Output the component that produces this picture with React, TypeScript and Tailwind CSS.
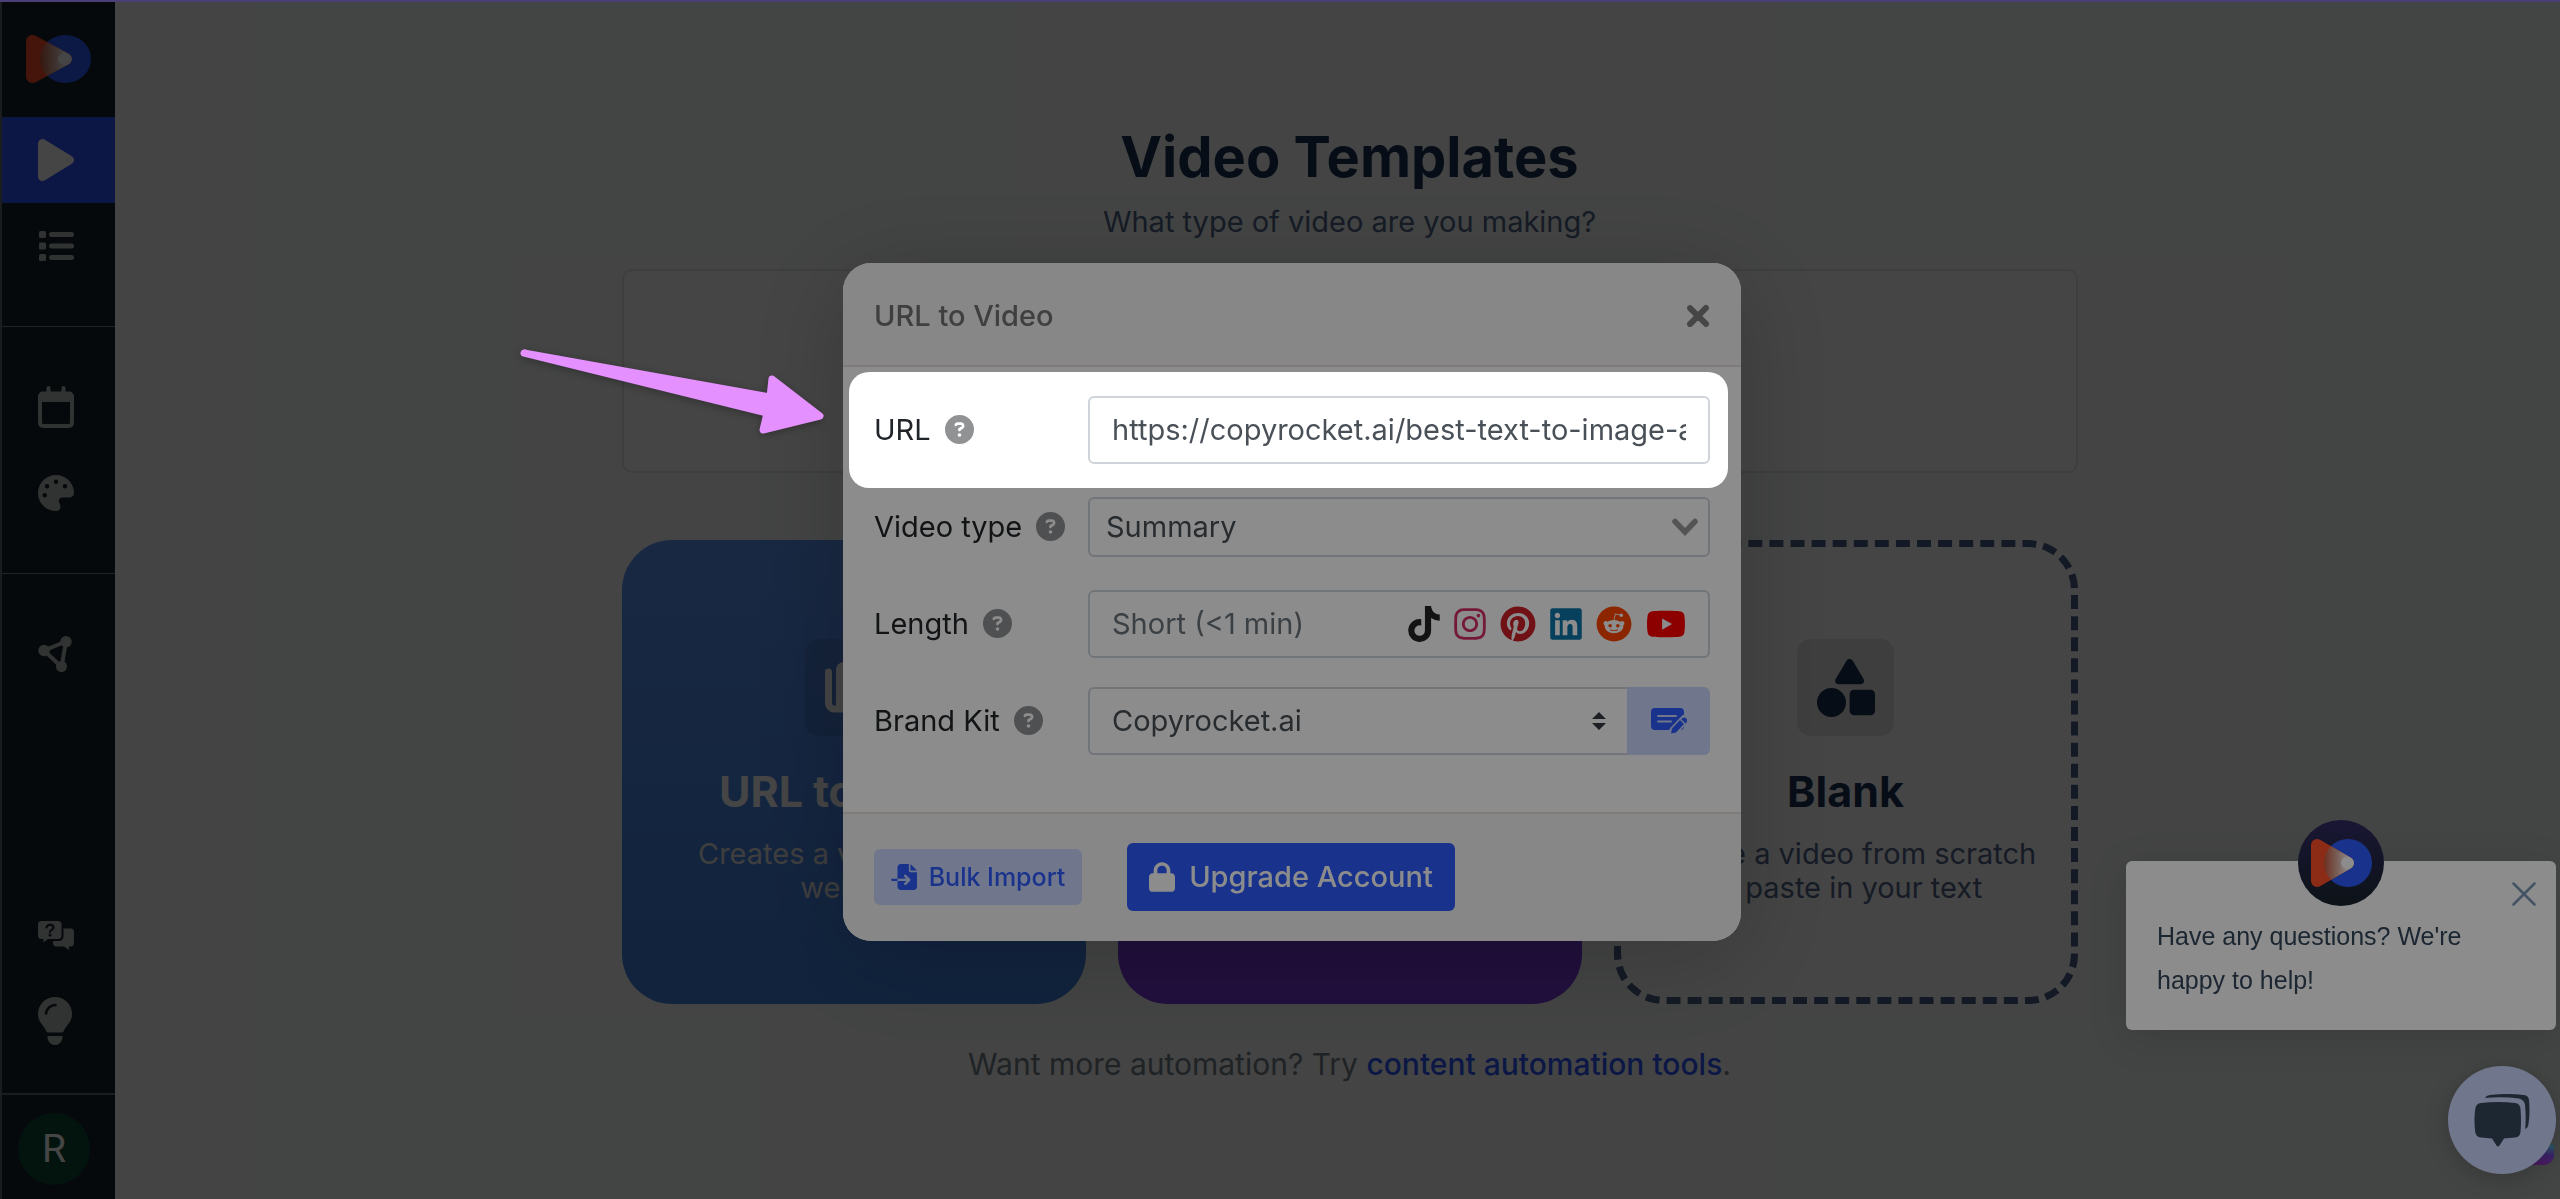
import type { ReactNode } from "react";
import {
  FaInstagram,
  FaLinkedin,
  FaPinterest,
  FaReddit,
  FaTiktok,
  FaYoutube,
} from "react-icons/fa";
import {
  FaCircleQuestion,
  FaFileImport,
  FaLock,
  FaPalette,
  FaShapes,
  FaXmark,
} from "react-icons/fa6";

const socialIcons = [
  { name: "TikTok", icon: FaTiktok, className: "h-9 w-8 text-[#242424]" },
  { name: "Instagram", icon: FaInstagram, className: "h-9 w-8 text-[#d62f6b]" },
  { name: "Pinterest", icon: FaPinterest, className: "h-9 w-9 text-[#cb2027]" },
  { name: "LinkedIn", icon: FaLinkedin, className: "h-9 w-8 text-[#0e76a8]" },
  { name: "Reddit", icon: FaReddit, className: "h-9 w-9 text-[#ff4500]" },
  { name: "YouTube", icon: FaYoutube, className: "h-9 w-10 text-[#ff0000]" },
];

function Logo({ id, className }: { id: string; className: string }) {
  return (
    <svg viewBox="0 0 62 50" preserveAspectRatio="none" className={className} aria-hidden="true">
      <defs>
        <linearGradient id={id} gradientUnits="userSpaceOnUse" x1="14" x2="42">
          <stop offset="0" stopColor="#c8583e" />
          <stop offset="0.4" stopColor="#d8a08f" />
          <stop offset="0.9" stopColor="#fff" />
        </linearGradient>
        <clipPath id={`${id}-clip`}>
          <circle cx="38" cy="25" r="24" />
        </clipPath>
      </defs>
      <circle cx="38" cy="25" r="24" fill="#2f5dff" />
      <path
        d="M7 7v36l31-18z"
        fill="#ff4f28"
        stroke="#ff4f28"
        strokeWidth="12"
        strokeLinejoin="round"
      />
      <g clipPath={`url(#${id}-clip)`}>
        <path
          d="M7 7v36l31-18z"
          fill={`url(#${id})`}
          stroke={`url(#${id})`}
          strokeWidth="12"
          strokeLinejoin="round"
        />
      </g>
      <circle cx="37" cy="25" r="6" fill="#fff" />
    </svg>
  );
}

function PlayIcon() {
  return (
    <svg viewBox="0 0 36 42" className="h-[42px] w-9" fill="currentColor" aria-hidden="true">
      <path
        d="M4.500 4.500v33L31.500 21z"
        stroke="currentColor"
        strokeWidth="9"
        strokeLinejoin="round"
      />
    </svg>
  );
}

function ListIcon() {
  return (
    <svg viewBox="0 0 36 30" className="h-[30px] w-9" fill="currentColor" aria-hidden="true">
      <rect x="1" y="0" width="7" height="7" rx="1.500" />
      <rect x="1" y="11.500" width="7" height="7" rx="1.500" />
      <rect x="1" y="23" width="7" height="7" rx="1.500" />
      <rect x="11" y="1" width="25" height="5" rx="2.500" />
      <rect x="11" y="12.500" width="25" height="5" rx="2.500" />
      <rect x="11" y="24" width="25" height="5" rx="2.500" />
    </svg>
  );
}

function CalendarIcon() {
  return (
    <svg viewBox="0 0 36 42" className="h-[42px] w-9" fill="currentColor" aria-hidden="true">
      <rect x="8.500" y="0" width="4" height="10" rx="2" />
      <rect x="23.500" y="0" width="4" height="10" rx="2" />
      <path
        fillRule="evenodd"
        d="M5 5.500h26a5 5 0 0 1 5 5V37a5 5 0 0 1-5 5H5a5 5 0 0 1-5-5V10.500a5 5 0 0 1 5-5zM4 16v20.500A1.500 1.500 0 0 0 5.500 38h25a1.500 1.500 0 0 0 1.500-1.500V16z"
      />
    </svg>
  );
}

function NetworkIcon() {
  return (
    <svg viewBox="0 0 36 36" className="h-9 w-9" fill="currentColor" aria-hidden="true">
      <path
        d="M6 14.500 28 5.500 23.500 31z"
        fill="none"
        stroke="currentColor"
        strokeWidth="4"
      />
      <circle cx="6" cy="14.500" r="5.700" />
      <circle cx="28" cy="5.700" r="5.700" />
      <circle cx="23.500" cy="30.500" r="5.500" />
    </svg>
  );
}

function QuestionChatIcon() {
  return (
    <svg viewBox="0 0 36 29" className="h-[29px] w-9" fill="currentColor" aria-hidden="true">
      <path d="M3.500 0h16.500a3.500 3.500 0 0 1 3.500 3.500v11a3.500 3.500 0 0 1-3.500 3.500H10l-4.500 3.500V18h-2A3.500 3.500 0 0 1 0 14.500v-11A3.500 3.500 0 0 1 3.500 0z" />
      <path d="M25.500 7.500h7A3.500 3.500 0 0 1 36 11v11a3.500 3.500 0 0 1-3.500 3.500H31V29l-5-3.500h-7.500a3.500 3.500 0 0 1-3.500-3.500v-2h6a4.500 4.500 0 0 0 4.500-4.500z" />
      <path
        d="M8.500 6.500c.3-1.800 1.600-2.700 3.500-2.700 2.100 0 3.500 1 3.500 2.800 0 2.400-3.500 2.200-3.500 4.400"
        fill="none"
        stroke="#16242c"
        strokeWidth="2"
        strokeLinecap="round"
      />
      <circle cx="12" cy="14" r="1.500" fill="#16242c" />
    </svg>
  );
}

function BulbIcon() {
  return (
    <svg viewBox="0 0 34 48" className="h-12 w-[34px]" fill="currentColor" aria-hidden="true">
      <path d="M17 0a17 17 0 0 1 17 16.500c0 9-5.500 11-8.500 18a1.800 1.800 0 0 1-1.500 1H10a1.800 1.800 0 0 1-1.500-1C5.500 27.500 0 25.500 0 16.500A17 17 0 0 1 17 0z" />
      <path d="M9.500 39h15v1.500a7.500 7.500 0 0 1-15 0z" />
      <path
        d="M8 16.500A9.500 9.500 0 0 1 17.500 8"
        fill="none"
        stroke="#16242c"
        strokeWidth="2.600"
        strokeLinecap="round"
      />
    </svg>
  );
}

function PagesIcon() {
  return (
    <svg viewBox="0 0 57 52" className="h-[52px] w-[57px]" fill="currentColor" aria-hidden="true">
      <path
        d="M3.500 10v31a6 6 0 0 0 6 6H44"
        fill="none"
        stroke="currentColor"
        strokeWidth="7"
        strokeLinecap="round"
      />
      <path d="M19 0h30a8 8 0 0 1 8 8v34a8 8 0 0 1-8 8H11V8a8 8 0 0 1 8-8z" />
    </svg>
  );
}

function EditCardIcon() {
  return (
    <svg viewBox="0 0 36 26" className="h-[26px] w-9" aria-hidden="true">
      <rect x="0" y="0" width="33" height="22" rx="4" fill="currentColor" />
      <path d="M7 8h18M7 13.500h13" stroke="#cdd8ff" strokeWidth="2" strokeLinecap="round" />
      <path
        d="M34 11 22.500 23"
        stroke="#cdd8ff"
        strokeWidth="9"
        strokeLinecap="round"
      />
      <path d="m29 12 4 4-8 8.500-5 1 1-5z" fill="currentColor" />
      <path d="M31 10.500a3 3 0 0 1 4.300 4.200l-.8.800-4.300-4.200z" fill="currentColor" />
    </svg>
  );
}

function NavItem({
  label,
  active = false,
  children,
}: {
  label: string;
  active?: boolean;
  children: ReactNode;
}) {
  return (
    <a
      href="#"
      aria-label={label}
      className={
        active
          ? "flex h-[86px] items-center bg-[#2c57ff] pl-9 text-white"
          : "flex h-[86px] items-center pl-9 text-[#b4b8b6]"
      }
    >
      {children}
    </a>
  );
}

function Sidebar() {
  return (
    <aside className="flex min-h-screen w-[115px] shrink-0 flex-col border-l-2 border-[#62666a] bg-[#16242c]">
      <a href="#" aria-label="Home" className="flex h-[117px] items-center pl-[23px]">
        <Logo id="nav-logo" className="h-[50px] w-[66px]" />
      </a>
      <nav>
        <NavItem label="Create video" active>
          <PlayIcon />
        </NavItem>
        <NavItem label="My videos">
          <ListIcon />
        </NavItem>
        <hr className="my-[37px] border-[#7c8084]" />
        <NavItem label="Calendar">
          <CalendarIcon />
        </NavItem>
        <NavItem label="Brand kits">
          <FaPalette className="h-9 w-9" />
        </NavItem>
        <hr className="my-[37px] border-[#7c8084]" />
        <NavItem label="Integrations">
          <NetworkIcon />
        </NavItem>
      </nav>
      <div className="mt-auto">
        <NavItem label="Support">
          <QuestionChatIcon />
        </NavItem>
        <NavItem label="Ideas">
          <BulbIcon />
        </NavItem>
        <div className="mt-[29px] border-t-2 border-[#62666a] px-4 pt-[18px] pb-[14px]">
          <button
            type="button"
            className="flex h-[72px] w-[72px] items-center justify-center rounded-full bg-[#0d4636] font-[Roboto] text-[39px] text-white"
          >
            R
          </button>
        </div>
      </div>
    </aside>
  );
}

function TemplateCards() {
  return (
    <div className="mt-[67px] grid grid-cols-3 gap-8 text-center">
      <a
        href="#"
        className="flex h-[464px] flex-col items-center rounded-[50px] bg-linear-to-b from-[#5c94f4] to-[#3f80e0] pt-[99px] text-white"
      >
        <span className="flex h-[97px] w-[97px] items-center justify-center rounded-[14px] bg-black/10">
          <PagesIcon />
        </span>
        <h2 className="mt-[29px] text-[43px] leading-[52px] font-bold">URL to Video</h2>
        <p className="mt-5 text-[29px] leading-[34px] text-[#e4e4e4]">
          Creates a video from a
          <br />
          website
        </p>
      </a>
      <a
        href="#"
        aria-label="Text to Video"
        className="h-[464px] rounded-[50px] bg-[#783ade]"
      />
      <a
        href="#"
        className="flex h-[464px] flex-col items-center rounded-[50px] border-[7px] border-dashed border-[#4c6288] bg-[#fdfdfd] pt-[92px] text-[#1a3054]"
      >
        <span className="flex h-[97px] w-[97px] items-center justify-center rounded-[14px] bg-[#e4e4e4]">
          <FaShapes className="h-[58px] w-[58px]" />
        </span>
        <h2 className="mt-[29px] text-[43px] leading-[52px] font-bold">Blank</h2>
        <p className="mt-5 text-[29px] leading-[34px] text-[#506488]">
          Create a video from scratch
          <br />
          or paste in your text
        </p>
      </a>
    </div>
  );
}

function FormRow({
  id,
  label,
  spotlight = false,
  children,
}: {
  id: string;
  label: string;
  spotlight?: boolean;
  children: ReactNode;
}) {
  return (
    <div className="relative flex h-[68px] items-center">
      <div className="flex w-[214px] shrink-0 items-center gap-[14px]">
        <label htmlFor={id} className="text-[#212529]">
          {label}
        </label>
        <FaCircleQuestion className="h-[29px] w-[29px] text-[#919294]" />
      </div>
      <div className="min-w-0 flex-1">{children}</div>
      {/* everything outside the highlighted row is dimmed by this shadow */}
      {spotlight && (
        <div className="pointer-events-none absolute -inset-y-6 -right-[18px] -left-[25px] z-50 rounded-[20px] shadow-[0_0_0_4000px_rgba(0,0,0,0.45)]" />
      )}
    </div>
  );
}

function UrlToVideoModal() {
  return (
    <div
      role="dialog"
      aria-labelledby="modal-title"
      className="w-[898px] rounded-[28px] bg-white text-[29px] leading-9 text-[#495057] shadow-[0_16px_100px_rgba(0,0,0,0.2)]"
    >
      <header className="flex h-[104px] items-center justify-between rounded-t-[28px] border-b-2 border-[#e8dfdf] bg-[#f6f6f6] px-[31px] pt-1">
        <h2 id="modal-title" className="font-medium text-[#747474]">
          URL to Video
        </h2>
        <button type="button" aria-label="Close" className="text-[#808080]">
          <FaXmark className="h-9 w-6" strokeWidth={32} stroke="currentColor" />
        </button>
      </header>

      <form className="flex flex-col gap-[29px] px-[31px] pt-[29px] pb-[57px]">
        <FormRow id="url" label="URL" spotlight>
          <input
            id="url"
            type="text"
            defaultValue="https://copyrocket.ai/best-text-to-image-ai-generators/"
            className="block h-[68px] w-full rounded-[6px] border-2 border-[#ced4da] px-[22px]"
          />
        </FormRow>

        <FormRow id="video-type" label="Video type">
          <div className="relative">
            <select
              id="video-type"
              className="block h-[60px] w-full appearance-none rounded-[6px] border-2 border-[#ced4da] px-4"
            >
              <option>Summary</option>
            </select>
            <svg
              viewBox="0 0 26 18"
              className="pointer-events-none absolute top-1/2 right-3 h-[18px] w-[26px] -translate-y-1/2"
              aria-hidden="true"
            >
              <path
                d="m3 3.500 10 10.500L23 3.500"
                fill="none"
                stroke="#999"
                strokeWidth="5.500"
                strokeLinecap="round"
              />
            </svg>
          </div>
        </FormRow>

        <FormRow id="length" label="Length">
          <button
            id="length"
            type="button"
            className="flex h-[68px] w-full items-center justify-between rounded-[6px] border-2 border-[#ced4da] px-[22px] text-[#6c757d]"
          >
            Short (&lt;1 min)
            <span className="flex items-center gap-[14px]">
              {socialIcons.map(({ name, icon: Icon, className }) => (
                <Icon key={name} className={className} />
              ))}
            </span>
          </button>
        </FormRow>

        <FormRow id="brand-kit" label="Brand Kit">
          <div className="flex">
            <div className="relative flex-1">
              <select
                id="brand-kit"
                className="block h-[68px] w-full appearance-none rounded-l-[6px] border-2 border-r-0 border-[#ced4da] px-[22px]"
              >
                <option>Copyrocket.ai</option>
              </select>
              <svg
                viewBox="0 0 14 18"
                className="pointer-events-none absolute top-1/2 right-[21px] h-[18px] w-[14px] -translate-y-1/2"
                fill="#343a40"
                aria-hidden="true"
              >
                <path d="M7 0 0 7h14zM7 18l-7-7h14z" />
              </svg>
            </div>
            <button
              type="button"
              aria-label="Edit brand kit"
              className="flex w-[83px] items-center justify-center rounded-r-[6px] bg-[#cdd8ff] text-[#2f5dff]"
            >
              <EditCardIcon />
            </button>
          </div>
        </FormRow>
      </form>

      <footer className="flex h-[129px] items-center gap-[45px] rounded-b-[28px] border-t-2 border-[#ebe2df] bg-[#f6f6f6] px-[31px]">
        <button
          type="button"
          className="flex h-14 w-[208px] items-center justify-center gap-3 rounded-[6px] bg-[#cdd8ff] text-[25px] font-medium text-[#2f5dff]"
        >
          <FaFileImport className="h-[26px] w-[26px]" />
          Bulk Import
        </button>
        <button
          type="button"
          className="flex h-[68px] w-[328px] items-center justify-center gap-[14px] rounded-[6px] bg-[#2f5dff] font-medium text-white"
        >
          <FaLock className="h-[30px] w-[26px]" />
          Upgrade Account
        </button>
      </footer>
    </div>
  );
}

function ChatWidget() {
  return (
    <div className="fixed right-1 bottom-[25px] z-10 flex flex-col items-end gap-9">
      <div className="relative w-[430px] rounded-[6px] bg-white px-[31px] pt-[53px] pb-7 font-['Liberation_Sans',sans-serif] text-[25px] leading-[44px] text-[#33475b] shadow-[0_8px_40px_rgba(0,0,0,0.12)]">
        <span className="absolute -top-[41px] left-1/2 flex h-[86px] w-[86px] -translate-x-1/2 items-center justify-center rounded-full bg-linear-to-b from-[#2f2860] to-[#17232c]">
          <Logo id="chat-logo" className="h-[50px] w-[62px]" />
        </span>
        <button
          type="button"
          aria-label="Dismiss"
          className="absolute top-[21px] right-5 text-[#7c98b6]"
        >
          <svg viewBox="0 0 24 24" className="h-6 w-6" aria-hidden="true">
            <path
              d="m1.500 1.500 21 21m0-21-21 21"
              stroke="currentColor"
              strokeWidth="2.500"
              strokeLinecap="round"
            />
          </svg>
        </button>
        <p>
          Have any questions? We're
          <br />
          happy to help!
        </p>
      </div>

      <div className="relative">
        <span className="absolute right-[2px] bottom-[9px] h-5 w-6 rounded-br-[10px] bg-linear-to-t from-[#8a2fb0] via-[#6a3fc0] to-[#35a5b8]" />
        <button
          type="button"
          aria-label="Open chat"
          className="relative flex h-[108px] w-[108px] items-center justify-center rounded-full bg-[#cdd8ff] text-[#33475b] shadow-[0_4px_24px_rgba(0,0,0,0.2)]"
        >
          <svg viewBox="0 0 56 53" className="h-[53px] w-14" fill="currentColor" aria-hidden="true">
            <path d="M7 9Q24 7 41 9q5 .5 5.500 6 1 12 0 23-.5 5-5.500 5.500-6 .7-11 1l-4.500 7q-1.500 2-3 0L18 44.500q-6-.3-11-1-5-.5-5.800-5.500-1.500-12 0-23Q2 9.500 7 9z" />
            <path d="M11 4Q12 1.500 16 1q17-2 34 0 4.500.5 5 5 1.200 13-.5 24-.5 4-3.300 5 1-13-.2-24-.5-5-6-6.500Q28 2.500 11 4z" />
          </svg>
        </button>
      </div>
    </div>
  );
}

export default function App() {
  return (
    <div className="relative flex min-h-screen overflow-hidden bg-[#f4fbf7] font-[Inter,sans-serif]">
      <Sidebar />

      <main className="flex-1 pt-[122px] pl-6">
        <div className="mx-auto max-w-[1456px]">
          <h1 className="text-center text-[56px] leading-[70px] font-bold text-[#1a3054]">
            Video Templates
          </h1>
          <p className="mt-3 text-center text-[29px] leading-9 text-[#506488]">
            What type of video are you making?
          </p>
          <div className="mt-[29px] h-[204px] rounded-[10px] border-2 border-[#e2e2e2] bg-[#fdfdfd]" />
          <TemplateCards />
          <p className="mt-[42px] text-center text-3xl leading-9 text-[#74808a]">
            Want more automation? Try{" "}
            <a href="#" className="font-medium text-[#2c57ff]">
              content automation tools
            </a>
            .
          </p>
        </div>
      </main>

      <div className="absolute inset-0 bg-black/50" />
      <ChatWidget />

      <div className="absolute inset-0 z-20 flex items-center justify-center pt-1 pl-6">
        <UrlToVideoModal />
      </div>

      {/* pointer towards the URL field */}
      <svg
        viewBox="0 0 310 90"
        className="absolute top-[347px] left-[518px] z-30 h-[90px] w-[310px] drop-shadow-[0_2px_4px_rgba(0,0,0,0.3)]"
        aria-hidden="true"
      >
        <path
          d="M6 6 252 50l2-18 48 37-57 14 4-17z"
          fill="#e590ff"
          stroke="#e590ff"
          strokeWidth="7"
          strokeLinejoin="round"
        />
      </svg>

      <div className="absolute inset-x-0 top-0 z-30 h-[2px] bg-[#4b3f78]" />
    </div>
  );
}
